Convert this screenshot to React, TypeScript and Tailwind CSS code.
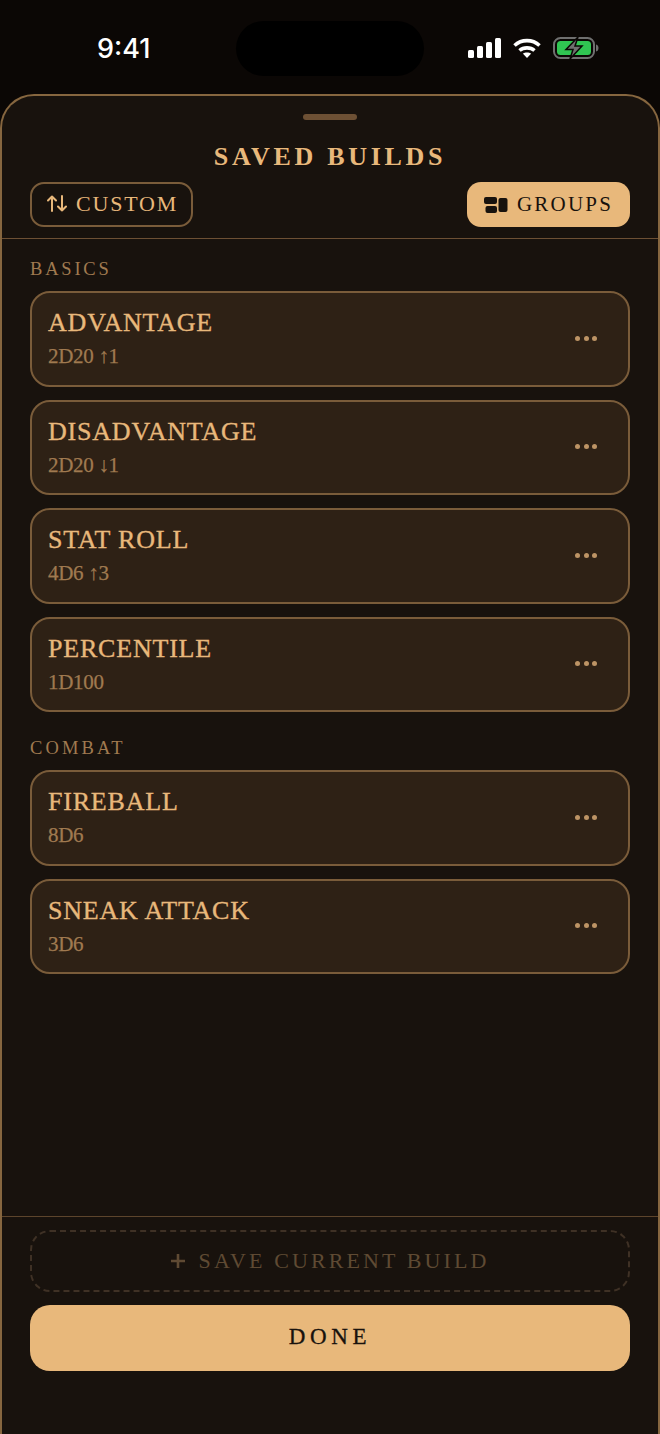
import React, { FC } from 'react'

type Build = { name: string; sub: string }

const basics: Build[] = [
  { name: 'ADVANTAGE', sub: '2D20 ↑1' },
  { name: 'DISADVANTAGE', sub: '2D20 ↓1' },
  { name: 'STAT ROLL', sub: '4D6 ↑3' },
  { name: 'PERCENTILE', sub: '1D100' },
]

const combat: Build[] = [
  { name: 'FIREBALL', sub: '8D6' },
  { name: 'SNEAK ATTACK', sub: '3D6' },
]

const BuildCard: FC<Build> = ({ name, sub }) => (
  <div className="flex h-[95.5px] items-center justify-between rounded-[20px] border-2 border-[#7a5c3a] bg-[#2e2115] pl-[16px] pr-[31px]">
    <div className="flex flex-col pb-[1px]">
      <span className="text-[26px] leading-[32px] tracking-[0.8px] text-[#e8b87b] [-webkit-text-stroke:0.35px_#e8b87b]">{name}</span>
      <span className="mt-[4px] text-[21px] leading-[26px] tracking-[-0.3px] text-[#a07a50] [-webkit-text-stroke:0.25px_#a07a50]">{sub}</span>
    </div>
    <div className="flex gap-[3.5px] pb-[1px]">
      <span className="h-[5px] w-[5px] rounded-full bg-[#bd9465]" />
      <span className="h-[5px] w-[5px] rounded-full bg-[#bd9465]" />
      <span className="h-[5px] w-[5px] rounded-full bg-[#bd9465]" />
    </div>
  </div>
)

const StatusBar: FC = () => (
  <div className="relative flex h-[94px] shrink-0 items-start justify-between pl-[97px] pr-[61px] pt-[33px]">
    <span className="font-['Inter',sans-serif] text-[27px] leading-[32px] font-medium text-white">9:41</span>
    <div className="absolute left-[236px] top-[21px] h-[55px] w-[188px] rounded-[28px] bg-black" />
    <div className="mt-[3px] flex items-center gap-[12px]">
      <svg width="33" height="20" viewBox="0 0 33 20" fill="#fff">
        <rect x="0" y="12" width="6" height="8" rx="1.5" />
        <rect x="9" y="8" width="6" height="12" rx="1.5" />
        <rect x="18" y="4" width="6" height="16" rx="1.5" />
        <rect x="27" y="0" width="6" height="20" rx="1.5" />
      </svg>
      <svg width="28" height="20" viewBox="0 0 28 20" fill="none" stroke="#fff" strokeWidth="3.6">
        <path d="M1.5 7.5 C8.5 1 19.5 1 26.5 7.5" />
        <path d="M6.5 12.5 C10.5 9 17.5 9 21.5 12.5" />
        <path d="M14 20 L9.8 15.6 C12 14 16 14 18.2 15.6 Z" fill="#fff" stroke="none" />
      </svg>
      <svg width="46" height="24" viewBox="0 0 46 24" fill="none">
        <rect x="1" y="2" width="40" height="20" rx="6.5" stroke="#6f6f6f" strokeWidth="2" />
        <rect x="4" y="5" width="34" height="14" rx="3.5" fill="#30c552" />
        <path d="M43 8.5 C45 9 45.5 10.5 45.5 12 C45.5 13.5 45 15 43 15.5 Z" fill="#6f6f6f" />
        <path d="M25 1 L13 13.5 H20 L17 23 L29 10 H22 Z" fill="#6f6f6f" stroke="#0a0705" strokeWidth="1.5" />
      </svg>
    </div>
  </div>
)

const App: FC = () => {
  return (
    <div className="flex h-[1434px] w-[660px] flex-col overflow-hidden bg-[#0b0705] font-['Liberation_Serif',serif]">
      <StatusBar />
      <div className="flex min-h-0 flex-1 flex-col rounded-t-[34px] border-x-2 border-t-2 border-[#86663f] bg-[#18120d]">
        <div className="mx-auto mt-[18px] h-[6px] w-[54px] rounded-full bg-[#6d5034]" />
        <h1 className="mt-[21px] text-center text-[26px] leading-[32px] font-bold tracking-[3.7px] text-[#e8b87b]">SAVED BUILDS</h1>
        <div className="mt-[9px] flex items-center justify-between px-[28px]">
          <button className="flex h-[45px] w-[163px] items-center gap-[9px] rounded-[14px] border-2 border-[#7a5c3a] pb-[2px] pl-[15px] text-[22px] tracking-[1.8px] text-[#e8b87b]">
            <svg width="20" height="17" viewBox="0 0 20 17" fill="none" stroke="#e8b87b" strokeWidth="2" strokeLinecap="round" strokeLinejoin="round">
              <path d="M5 16V1.5M1 5.5L5 1.5L9 5.5" />
              <path d="M15 1V15.5M11 11.5L15 15.5L19 11.5" />
            </svg>
            CUSTOM
          </button>
          <button className="flex h-[45px] w-[163px] items-center gap-[9px] rounded-[14px] bg-[#e8b87b] pl-[17px] text-[21px] tracking-[2.2px] text-[#18120d]">
            <svg width="24" height="16" viewBox="0 0 24 16" fill="#18120d">
              <rect x="0" y="0" width="13" height="7" rx="2" />
              <rect x="1.5" y="9" width="11.5" height="7" rx="2" />
              <rect x="14.5" y="1" width="9" height="14" rx="2" />
            </svg>
            GROUPS
          </button>
        </div>
        <div className="mt-[11px] h-[1px] shrink-0 bg-[#6d5034]" />
        <div className="flex min-h-0 flex-1 flex-col px-[28px]">
          <div className="mt-[19px] text-[18.5px] leading-[22px] tracking-[2.8px] text-[#a07a50]">BASICS</div>
          <div className="mt-[11px] flex flex-col gap-[13px]">
            {basics.map(b => (
              <BuildCard key={b.name} {...b} />
            ))}
          </div>
          <div className="mt-[25px] text-[18.5px] leading-[22px] tracking-[3.1px] text-[#a07a50]">COMBAT</div>
          <div className="mt-[11px] flex flex-col gap-[13px]">
            {combat.map(b => (
              <BuildCard key={b.name} {...b} />
            ))}
          </div>
        </div>
        <div className="h-[1px] shrink-0 bg-[#5d452c]" />
        <div className="flex h-[217px] shrink-0 flex-col gap-[13px] px-[28px] pt-[13px]">
          <button className="flex h-[62px] items-center justify-center gap-[14px] rounded-[20px] border-2 border-dashed border-[#3f3125] pb-[1px] text-[22px] tracking-[3.1px] text-[#5f4a33]">
            <svg width="14" height="14" viewBox="0 0 14 14" fill="none" stroke="#5f4a33" strokeWidth="2.6">
              <path d="M7 0V14M0 7H14" />
            </svg>
            SAVE CURRENT BUILD
          </button>
          <button className="h-[66px] rounded-[20px] bg-[#e8b87b] pb-[2px] text-[23px] tracking-[4.6px] text-[#18120d] [-webkit-text-stroke:0.3px_#18120d]">DONE</button>
        </div>
      </div>
    </div>
  )
}

export default App
